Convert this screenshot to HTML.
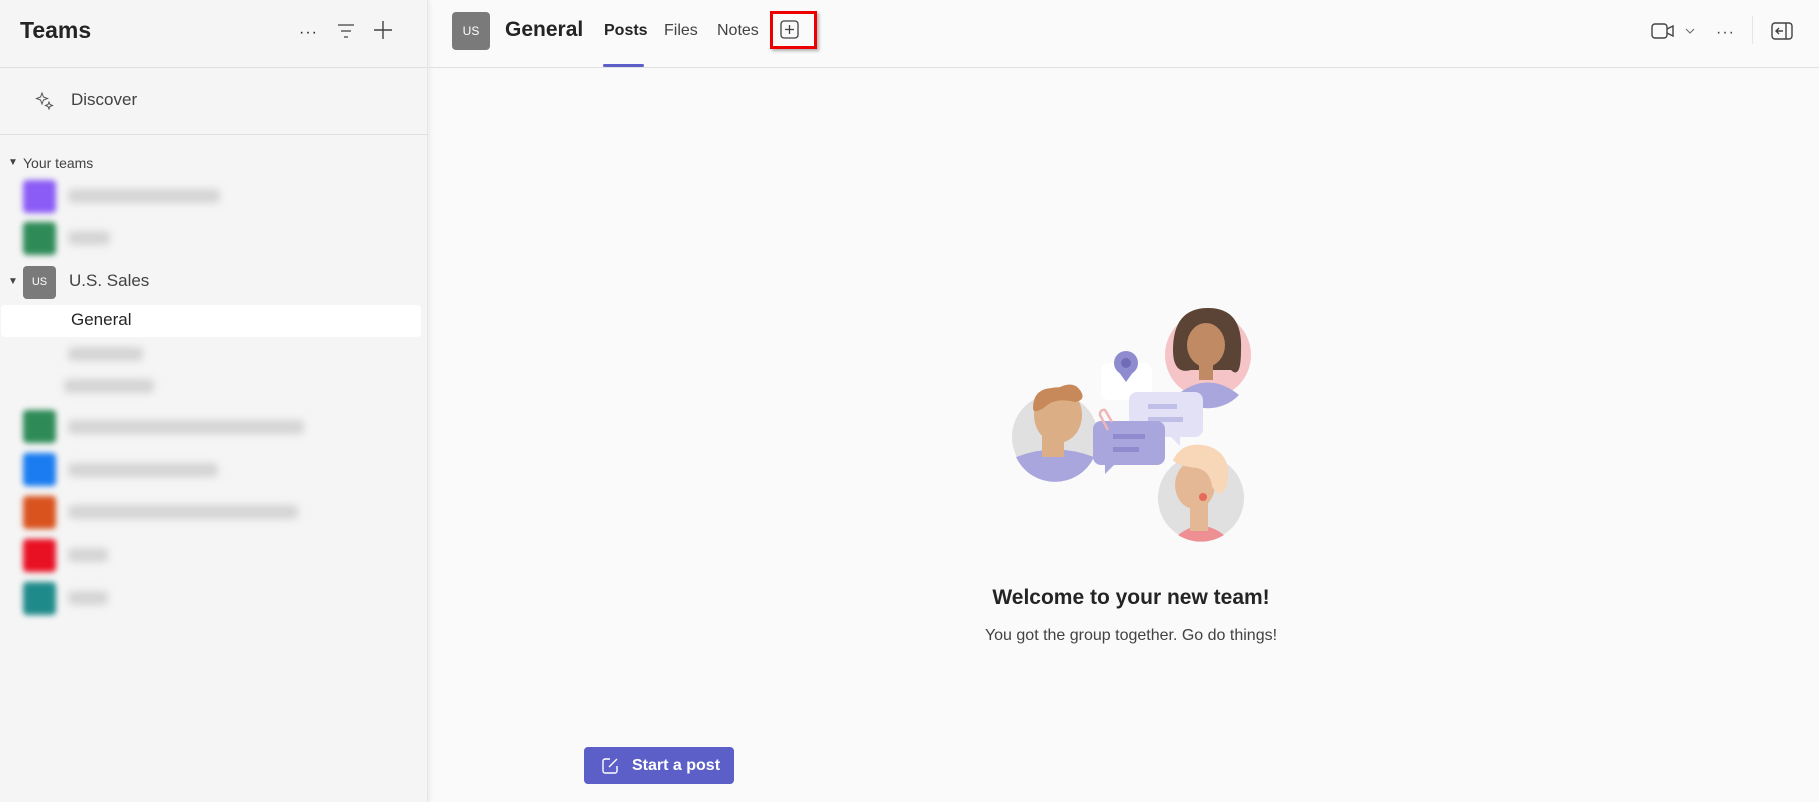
<!DOCTYPE html>
<html><head><meta charset="utf-8"><style>
*{margin:0;padding:0;box-sizing:border-box}
body{width:1819px;height:802px;overflow:hidden;background:#fafafa;font-family:"Segoe UI","Liberation Sans",sans-serif;color:#242424;position:relative}
.a{position:absolute;white-space:nowrap}
#side{position:absolute;left:0;top:0;width:428px;height:802px;background:#f5f5f5;border-right:1px solid #e6e6e6;box-shadow:2px 0 4px rgba(0,0,0,.06)}
.hl{position:absolute;left:0;height:1px;background:#e0e0e0}
.av{position:absolute;left:23px;width:33px;height:33px;border-radius:4px;filter:blur(3px)}
.bl{position:absolute;height:14px;background:#ccc;border-radius:4px;filter:blur(4px);opacity:.8}
</style></head><body>
<div id="side">
<div class="a" style="left:20px;top:17px;font-size:23px;font-weight:bold">Teams</div>
<div class="a" style="left:299px;top:24px;font-size:16px;letter-spacing:1px">···</div>
<svg class="a" style="left:337px;top:23px" width="18" height="16"><path d="M1 2h16M4 8h10M7 14h4" stroke="#424242" stroke-width="1.3"/></svg>
<svg class="a" style="left:373px;top:20px" width="20" height="20"><path d="M10 1v18M1 10h18" stroke="#424242" stroke-width="1.4"/></svg>
<div class="hl" style="top:67px;width:428px"></div>
<svg class="a" style="left:35px;top:91px" width="20" height="20"><path d="M7 2l1.5 4 4 1.5-4 1.5L7 13l-1.5-4L1.5 7.5l4-1.5z M14 11l1 2.5 2.5 1-2.5 1-1 2.5-1-2.5-2.5-1 2.5-1z" fill="none" stroke="#555" stroke-width="1"/></svg>
<div class="a" style="left:71px;top:90px;font-size:17px;color:#424242">Discover</div>
<div class="hl" style="top:134px;width:428px"></div>
<div class="a" style="left:8px;top:157px;font-size:10px;color:#424242">▼</div>
<div class="a" style="left:23px;top:155px;font-size:14px;color:#424242">Your teams</div>
<div class="av" style="top:180px;background:#8b5cf6"></div><div class="bl" style="left:68px;top:189px;width:152px"></div>
<div class="av" style="top:222px;background:#2e8b57"></div><div class="bl" style="left:68px;top:231px;width:42px"></div>
<div class="a" style="left:8px;top:276px;font-size:10px;color:#424242">▼</div>
<div class="a" style="left:23px;top:266px;width:33px;height:33px;border-radius:4px;background:#7a7a7a;color:#fff;font-size:11px;line-height:33px;text-align:center">US</div>
<div class="a" style="left:69px;top:271px;font-size:17px;color:#424242">U.S. Sales</div>
<div class="a" style="left:1px;top:305px;width:420px;height:32px;background:#fff;border-radius:4px"></div>
<div class="a" style="left:71px;top:310px;font-size:17px">General</div>
<div class="bl" style="left:68px;top:347px;width:75px"></div>
<div class="bl" style="left:64px;top:379px;width:90px"></div>
<div class="av" style="top:410px;background:#2e8b57"></div><div class="bl" style="left:68px;top:420px;width:236px"></div>
<div class="av" style="top:453px;background:#1a7cf0"></div><div class="bl" style="left:68px;top:463px;width:150px"></div>
<div class="av" style="top:496px;background:#d9531e"></div><div class="bl" style="left:68px;top:505px;width:230px"></div>
<div class="av" style="top:539px;background:#e81123"></div><div class="bl" style="left:68px;top:548px;width:40px"></div>
<div class="av" style="top:582px;background:#1f8a8a"></div><div class="bl" style="left:68px;top:591px;width:40px"></div>
</div>
<div class="hl" style="left:429px;top:67px;width:1390px"></div>
<div class="a" style="left:452px;top:12px;width:38px;height:38px;border-radius:4px;background:#7a7a7a;color:#fff;font-size:12px;line-height:38px;text-align:center">US</div>
<div class="a" style="left:505px;top:18px;font-size:21px;font-weight:bold">General</div>
<div class="a" style="left:604px;top:22px;font-size:16px;font-weight:bold">Posts</div>
<div class="a" style="left:603px;top:64px;width:41px;height:3px;background:#5b5fc7;border-radius:2px"></div>
<div class="a" style="left:664px;top:22px;font-size:16px;color:#424242">Files</div>
<div class="a" style="left:717px;top:22px;font-size:16px;color:#424242">Notes</div>
<div class="a" style="left:770px;top:11px;width:47px;height:38px;border:3px solid #e00;box-shadow:2px 2px 3px rgba(0,0,0,.3)"></div>
<svg class="a" style="left:780px;top:20px" width="19" height="19"><rect x="1" y="1" width="17" height="17" rx="3" fill="none" stroke="#424242" stroke-width="1.3"/><path d="M9.5 5v9M5 9.5h9" stroke="#424242" stroke-width="1.3"/></svg>
<svg class="a" style="left:1651px;top:22px" width="24" height="18"><rect x="1" y="2" width="15" height="14" rx="3" fill="none" stroke="#424242" stroke-width="1.4"/><path d="M16 7l6-3v10l-6-3" fill="none" stroke="#424242" stroke-width="1.4"/></svg>
<svg class="a" style="left:1685px;top:28px" width="10" height="6"><path d="M1 1l4 4 4-4" fill="none" stroke="#666" stroke-width="1"/></svg>
<div class="a" style="left:1716px;top:24px;font-size:16px;letter-spacing:1px;color:#424242">···</div>
<div class="a" style="left:1752px;top:16px;width:1px;height:28px;background:#e6e6e6"></div>
<svg class="a" style="left:1771px;top:22px" width="22" height="18"><rect x="1" y="1" width="20" height="16" rx="3" fill="none" stroke="#424242" stroke-width="1.4"/><path d="M15 1v16M12 9H5M8 6L5 9l3 3" fill="none" stroke="#424242" stroke-width="1.4"/></svg>
<svg class="a" style="left:980px;top:290px" width="300" height="260" viewBox="0 0 300 260">
<circle cx="228" cy="65" r="43" fill="#f5c4c7"/>
<path d="M197 105q31-25 62 0a43 43 0 0 1-62 0z" fill="#a8a6dc"/>
<path d="M193 60q0-42 35-42t33 42q0 30 -10 20l-40 0q-18 5-18-20z" fill="#5b4336"/>
<ellipse cx="226" cy="55" rx="19" ry="22" fill="#c08a64"/>
<rect x="219" y="70" width="14" height="20" fill="#c08a64"/>
<circle cx="75" cy="147" r="43" fill="#e0e0e0"/>
<path d="M36 167q39-15 78 0a43 43 0 0 1-78 0z" fill="#a8a6dc"/>
<rect x="62" y="135" width="22" height="32" fill="#dcae86"/>
<ellipse cx="78" cy="125" rx="24" ry="28" fill="#dcae86"/>
<path d="M53 118q0-22 25-20 15-8 22 2t-5 12q-20-5-30 5-12 8-12 1z" fill="#c8895a"/>
<rect x="121" y="73" width="51" height="37" rx="8" fill="#fff"/>
<circle cx="146" cy="73" r="12" fill="#8e8ccf"/><path d="M136 78l10 14 10-14z" fill="#8e8ccf"/><circle cx="146" cy="73" r="5" fill="#6f6cb8"/>
<rect x="149" y="102" width="74" height="45" rx="8" fill="#e2e1f5"/><path d="M190 146l10 10v-10z" fill="#e2e1f5"/>
<rect x="168" y="114" width="29" height="5" fill="#c0bfe8"/><rect x="168" y="127" width="35" height="5" fill="#c0bfe8"/>
<rect x="113" y="131" width="72" height="44" rx="8" fill="#a8a6dc"/><path d="M125 174v10l10-10z" fill="#a8a6dc"/>
<rect x="133" y="144" width="32" height="5" fill="#8e8ccf"/><rect x="133" y="157" width="26" height="5" fill="#8e8ccf"/>
<path d="M128 140l-8-15q0-6 5-5l7 12" fill="none" stroke="#f0b5b8" stroke-width="2.5"/>
<circle cx="221" cy="208" r="43" fill="#e0e0e0"/>
<path d="M198 245q23-18 46 0a43 43 0 0 1-46 0z" fill="#ee8f93"/>
<rect x="210" y="205" width="18" height="36" fill="#e4b894"/>
<ellipse cx="215" cy="195" rx="20" ry="24" fill="#e4b894"/>
<path d="M193 170q10-20 35-14 25 8 19 40-8 15-15 0-2-15-15-18-20-2-24-8z" fill="#f7d7b8"/>
<circle cx="223" cy="207" r="4" fill="#e8685a"/>
</svg>
<div class="a" style="left:931px;top:586px;width:400px;text-align:center;font-size:21px;font-weight:bold">Welcome to your new team!</div>
<div class="a" style="left:931px;top:627px;width:400px;text-align:center;font-size:16px;color:#424242">You got the group together. Go do things!</div>
<div class="a" style="left:584px;top:747px;width:150px;height:37px;background:#5b5fc7;border-radius:4px;color:#fff;font-size:16px;font-weight:bold;line-height:37px;padding-left:48px">Start a post</div>
<svg class="a" style="left:601px;top:757px" width="18" height="18"><path d="M9 2H4a2 2 0 0 0-2 2v10a2 2 0 0 0 2 2h10a2 2 0 0 0 2-2V9M8 10l8-8" fill="none" stroke="#fff" stroke-width="1.4"/></svg>
</body></html>
